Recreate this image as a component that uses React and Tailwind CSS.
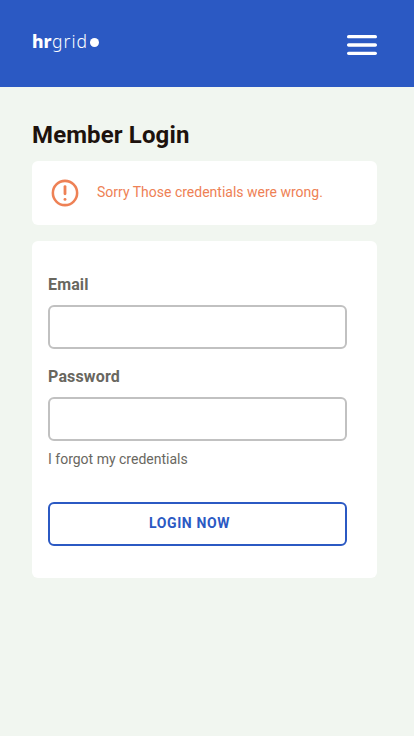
export default function App() {
  return (
    <div className="min-h-screen bg-[#f1f6f0] font-['Roboto',sans-serif]">
      <header className="flex h-[87px] items-start justify-between bg-[#2b59c3] pl-8 pr-8">
        <div className="flex pt-[29px] font-['Noto_Sans',sans-serif] text-[17.5px] leading-6 text-white">
          <span className="w-[20px] font-extrabold">hr</span>
          <span className="w-[38px] font-light tracking-[1px]">grid</span>
          <span className="mt-[9px] size-[9px] rounded-full bg-white" />
        </div>
        <svg className="mt-[25px] size-10" viewBox="0 0 24 24" fill="white">
          <path d="M4 18h16c.55 0 1-.45 1-1s-.45-1-1-1H4c-.55 0-1 .45-1 1s.45 1 1 1zm0-5h16c.55 0 1-.45 1-1s-.45-1-1-1H4c-.55 0-1 .45-1 1s.45 1 1 1zM3 7c0 .55.45 1 1 1h16c.55 0 1-.45 1-1s-.45-1-1-1H4c-.55 0-1 .45-1 1z" />
        </svg>
      </header>
      <main className="pt-8 pl-8">
        <h1 className="text-2xl leading-8 font-bold tracking-[0.12px] text-[#1e120d]">Member Login</h1>
        <div className="mt-[10px] flex h-16 w-[345px] items-center gap-4 rounded-md bg-white pr-4 pl-[17px] text-[#ee8155]">
          <svg className="size-8" viewBox="0 0 24 24" fill="none" stroke="currentColor" strokeLinecap="round">
            <circle cx="12" cy="12" r="9.1" strokeWidth="1.9" />
            <path d="M12 7.2v5.4" strokeWidth="2.1" />
            <circle cx="12" cy="16.8" r="1.1" fill="currentColor" stroke="none" />
          </svg>
          <p className="mb-0.5 text-sm">Sorry Those credentials were wrong.</p>
        </div>
        <form className="mt-4 flex h-[337px] w-[345px] flex-col rounded-md bg-white pt-8 pr-[30px] pl-4 text-[#69675f]">
          <label htmlFor="email" className="text-base leading-6 font-bold tracking-[0.15px]">Email</label>
          <input id="email" type="email" className="mt-2 h-11 rounded-md border-2 border-[#c1c1c1] px-3 outline-none" />
          <label htmlFor="password" className="mt-4 text-base leading-6 font-bold tracking-[0.15px]">Password</label>
          <input id="password" type="password" className="mt-2 h-11 rounded-md border-2 border-[#c1c1c1] px-3 outline-none" />
          <a className="mt-2 text-sm">I forgot my credentials</a>
          <button type="button" className="mt-[33px] h-11 rounded-md border-2 border-[#2b59c3] pr-4 pb-0.5 text-sm font-bold tracking-[0.6px] text-[#2b59c3]">
            LOGIN NOW
          </button>
        </form>
      </main>
    </div>
  );
}
